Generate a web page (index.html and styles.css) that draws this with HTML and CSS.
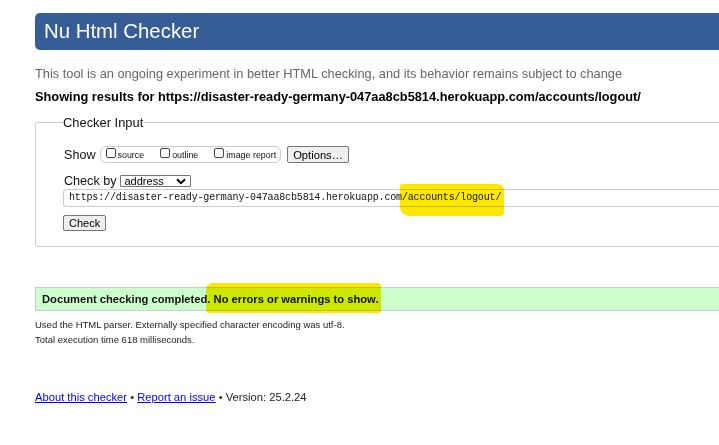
FILE: index.html
```html
<!DOCTYPE html>
<html>
<head>
<meta charset="utf-8">
<title>Nu Html Checker</title>
<link rel="stylesheet" href="styles.css">
</head>
<body>
<div class="page">
  <header class="masthead"><h1>Nu Html Checker</h1></header>
  <p class="intro">This tool is an ongoing experiment in better HTML checking, and its behavior remains subject to change</p>
  <p class="showing">Showing results for https://disaster-ready-germany-047aa8cb5814.herokuapp.com/accounts/logout/</p>
  <fieldset class="checker">
    <legend>Checker Input</legend>
    <div class="row show-row">
      <span class="lbl">Show</span>
      <div class="opts">
        <label><span class="box"></span>source</label>
        <label><span class="box"></span>outline</label>
        <label><span class="box"></span>image report</label>
      </div>
      <span class="btn opt-btn">Options…</span>
    </div>
    <div class="row by-row">
      <span class="lbl">Check by</span>
      <span class="select">address<svg width="10" height="7" viewBox="0 0 10 7"><path d="M1 1.2 L5 5.2 L9 1.2" fill="none" stroke="#000" stroke-width="2"/></svg></span>
    </div>
    <div class="url">https://disaster-ready-germany-047aa8cb5814.herokuapp.com<span class="mark mark-url">/accounts/logout/</span></div>
    <span class="btn check">Check</span>
  </fieldset>
  <p class="success"><strong>Document checking completed. <span class="mark mark-ok">No errors or warnings to show.</span></strong></p>
  <p class="details first">Used the HTML parser. Externally specified character encoding was utf-8.</p>
  <p class="details">Total execution time 618 milliseconds.</p>
  <p class="footer"><a href="#">About this checker</a> • <a href="#">Report an issue</a> • Version: 25.2.24</p>
</div>
</body>
</html>
```

FILE: styles.css
```css
html, body { margin: 0; padding: 0; overflow: hidden; background: #fff; }
body { font-family: "Liberation Sans", Arial, sans-serif; color: #000; }
.page { margin: 0 -30px 0 35px; padding-top: 13px; }
.masthead { background: #365d95; border-radius: 5px 0 0 5px; height: 37px; display: flex; align-items: center; }
.masthead h1 { margin: 0 0 0 9px; font-weight: normal; font-size: 20.4px; color: #fff; line-height: 1; }
.intro { margin: 15px 0 0; font-size: 12.8px; line-height: 17px; color: #666; }
.showing { margin: 6px 0 0; font-size: 12.8px; line-height: 17px; font-weight: bold; }
.checker { margin: 9px 0 0; border: 1px solid #ccc; border-radius: 3px; padding: 15px 0 15px 28px; }
.checker legend { font-size: 12.9px; padding: 0; margin-left: -1px; line-height: 17px; color: #111; }
.row { display: flex; align-items: center; font-size: 12.6px; color: #111; }
.lbl { margin-right: 4px; }
.show-row { height: 17px; }
.opts { display: flex; border: 1px solid #ccc; border-radius: 6px; height: 15px; padding: 0 4px 0 5px; align-items: center; }
.opts label { display: flex; align-items: center; font-size: 8.9px; margin-right: 16px; color: #111; }
.opts label:last-child { margin-right: 0; }
.box { width: 8px; height: 8px; border: 1px solid #444; border-radius: 2px; margin-right: 2px; position: relative; top: -2px; }
.btn { display: inline-flex; align-items: center; justify-content: center; background: #efefef; border: 1px solid #767676; border-radius: 2px; color: #000; }
.opt-btn { margin-left: 6px; height: 15px; padding: 0 5px; font-size: 11.2px; }
.by-row { margin-top: 11px; height: 14px; }
.by-row .lbl { margin-right: 3px; }
.select { display: flex; align-items: center; justify-content: space-between; border: 1px solid #767676; height: 10px; width: 61px; padding: 0 4px 0 4px; font-size: 11px; border-radius: 1px; color: #000; }
.url { margin-top: 1px; margin-left: -1px; border: 1px solid #ccc; border-right: none; border-radius: 3px 0 0 3px; height: 16px; line-height: 16px; padding-left: 5px; font-family: "Liberation Mono", "DejaVu Sans Mono", monospace; font-size: 10px; letter-spacing: -0.16px; color: #111; }
.check { display: flex; width: fit-content; margin-top: 8px; margin-left: -1px; height: 14px; padding: 0 5px; font-size: 11px; }
.mark { position: relative; display: inline-block; }
.mark::before { content: ""; position: absolute; background: #ffe800; mix-blend-mode: multiply; }
.mark-url { line-height: 16px; }
.mark-url::before { left: -2px; right: -3px; top: -6px; bottom: -10px; border-radius: 2px 6px 4px 9px; }
.mark-ok { line-height: 22px; }
.mark-ok::before { left: -8px; right: -2px; top: -5px; bottom: -3px; border-radius: 7px 4px 3px 3px; }
.success { margin: 40px 0 0; background: #ccffcc; border: 1px solid #ccc; border-right: none; height: 22px; line-height: 22px; padding-left: 6px; font-size: 11.2px; color: #111; }
.details { margin: 0; font-size: 9.5px; color: #222; line-height: 15px; }
.details.first { margin-top: 6px; }
.footer { margin: 44px 0 0; font-size: 11.2px; line-height: 13px; color: #222; }
.footer a { color: #00e; }
```
